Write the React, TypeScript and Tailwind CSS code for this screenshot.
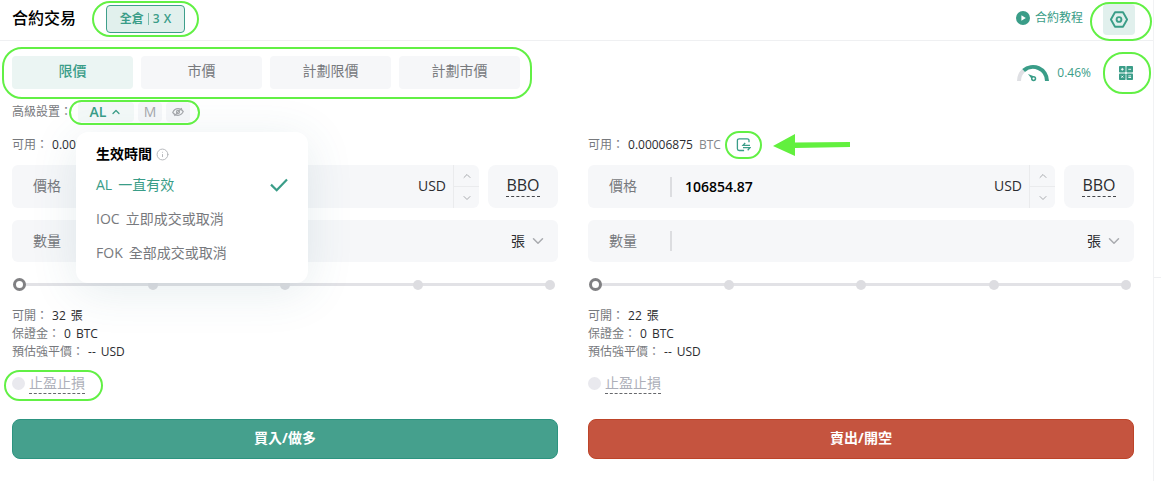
import { useState } from 'react'
import type { ReactNode } from 'react'
import { ChevronDown, ChevronUp, Info } from 'lucide-react'

const orderTypes = ['限價', '市價', '計劃限價', '計劃市價']

const timeInForce = [
  { code: 'AL', label: '一直有效' },
  { code: 'IOC', label: '立即成交或取消' },
  { code: 'FOK', label: '全部成交或取消' },
]

// Green outline that points out a feature of the form
function Highlight({ className }: { className: string }) {
  return (
    <span
      aria-hidden="true"
      className={`pointer-events-none absolute z-30 border-2 border-[#62f045] ${className}`}
    />
  )
}

function SettingsIcon() {
  return (
    <svg width="20" height="20" viewBox="0 0 20 20" fill="none" stroke="#3a9d88" strokeWidth="1.9" strokeLinejoin="round">
      <path d="M6 2.2h8l4.1 7.3-4.1 7.300H6L1.900 9.500z" />
      <circle cx="10" cy="9.5" r="2.4" />
    </svg>
  )
}

function PlayIcon() {
  return (
    <svg width="14" height="14" viewBox="0 0 14 14">
      <circle cx="7" cy="7" r="7" fill="#3a9d88" />
      <path d="M5.4 4.2v5.6L9.8 7z" fill="#fff" />
    </svg>
  )
}

function GaugeIcon() {
  return (
    <svg width="32" height="18" viewBox="0 0 32 18" fill="none">
      <path d="M2 17A14 14 0 0 1 6.6 6.6" stroke="#dfe0e4" strokeWidth="4" />
      <path d="M6.6 6.6A14 14 0 0 1 30 17" stroke="#3a9d88" strokeWidth="4" />
      <path d="M11 10l5.800 2.300-2.200 2.400z" fill="#3a9d88" />
      <circle cx="16.6" cy="14.6" r="1.9" fill="#fff" stroke="#3a9d88" strokeWidth="1.5" />
    </svg>
  )
}

function CalculatorIcon() {
  return (
    <svg width="14" height="14" viewBox="0 0 14 14">
      <g fill="#3a9d88">
        <rect width="6.6" height="6.6" rx=".8" />
        <rect x="7.4" width="6.6" height="6.6" rx=".8" />
        <rect y="7.4" width="6.6" height="6.6" rx=".8" />
        <rect x="7.4" y="7.4" width="6.6" height="6.6" rx=".8" />
      </g>
      <path
        d="M1.900 3.300h2.800M3.300 1.900v2.800M9.300 3.300h2.800M2.300 9.700l2 2M4.300 9.700l-2 2M9.300 9.900h2.800M9.300 11.500h2.800"
        stroke="#fff"
        strokeWidth=".9"
      />
    </svg>
  )
}

function TransferIcon() {
  return (
    <svg width="15" height="14" viewBox="0 0 15 14" fill="none" stroke="#3a9d88" strokeWidth="1.3">
      <path d="M13 4.300V2.500A1.700 1.700 0 0 0 11.300.8H3.100A1.700 1.700 0 0 0 1.400 2.500v8.300a1.700 1.700 0 0 0 1.700 1.700h5" />
      <path d="M14 7.400H7l2.200-2.400M7 9.700h7l-2.300 2.500" />
    </svg>
  )
}

function HiddenIcon() {
  return (
    <svg width="12" height="10" viewBox="0 0 12 10" fill="none" stroke="#a6a8ac" strokeWidth="1.1">
      <path d="M.7 5.400C2 2.700 4 1.600 6 1.600c2.200 0 4 1 5.300 3C10 7.300 8 8.400 6 8.400 3.800 8.400 2 7.400.7 5.400z" />
      <circle cx="6" cy="5" r="1.6" />
      <path d="M2.400 8.800L9.800 1.200" />
    </svg>
  )
}

function ArrowLeftMark() {
  return (
    <svg
      width="77"
      height="24"
      viewBox="0 0 77 24"
      aria-hidden="true"
      className="pointer-events-none absolute top-1/2 left-full ml-[22px] -translate-y-1/2"
    >
      <path d="M0 13L22 1v8.500L77 9v5l-55 1v8z" fill="#62f03e" />
    </svg>
  )
}

function TimeInForceMenu() {
  const [selected, setSelected] = useState('AL')

  return (
    <div className="absolute top-[30px] -left-[2px] z-20 w-[232px] rounded-xl bg-white px-5 pt-3 pb-[13px] shadow-[0_8px_48px_rgba(50,110,125,0.12)]">
      <div className="flex h-5 items-center gap-1 text-sm font-bold text-black">
        生效時間
        <Info className="mt-px h-[13px] w-[13px] text-[#b4b6ba]" strokeWidth={1.8} />
      </div>
      <div className="mt-1">
        {timeInForce.map(({ code, label }) => (
          <button
            key={code}
            type="button"
            onClick={() => setSelected(code)}
            className={`flex h-[34px] w-full items-center gap-[6px] text-left text-sm ${
              selected === code ? 'text-[#3a9d88]' : 'text-[#77797d]'
            }`}
          >
            <span>{code}</span>
            <span>{label}</span>
            {selected === code && (
              <svg className="ml-auto" width="18" height="14" viewBox="0 0 18 14" fill="none" stroke="#3a9d88" strokeWidth="2.200">
                <path d="M1 6.600l5.700 5.600L17 1.600" />
              </svg>
            )}
          </button>
        ))}
      </div>
    </div>
  )
}

function PriceField({ id }: { id: string }) {
  return (
    <div className="mt-[11px] flex gap-[9px]">
      <div className="flex h-[43px] min-w-0 flex-1 items-center rounded-md bg-[#f6f7f9] text-sm">
        <label htmlFor={id} className="w-[82px] shrink-0 pb-px pl-[21px] text-[#77797d]">
          價格
        </label>
        <input
          id={id}
          defaultValue="106854.87"
          className="h-5 min-w-0 flex-1 border-l-2 border-[#dcdde0] bg-transparent pl-[13px] font-semibold text-black outline-none"
        />
        <span className="mr-[7px] pb-px text-[#2b2c30]">USD</span>
        <div className="flex w-[26px] flex-col self-stretch border-l border-[#eaebed] text-[#a9abaf]">
          <button type="button" aria-label="增加" className="flex flex-1 items-center justify-center border-b border-[#eaebed]">
            <ChevronUp className="h-3 w-3" strokeWidth={2} />
          </button>
          <button type="button" aria-label="減少" className="flex flex-1 items-center justify-center">
            <ChevronDown className="h-3 w-3" strokeWidth={2} />
          </button>
        </div>
      </div>
      <button type="button" className="flex w-[70px] items-center justify-center rounded-lg bg-[#f6f7f9] pb-[3px] text-[#2b2c30]">
        <span className="border-b border-dashed border-[#44464a] leading-[22px]">BBO</span>
      </button>
    </div>
  )
}

function AmountField({ id }: { id: string }) {
  return (
    <div className="mt-3 flex h-[42px] items-center rounded-md bg-[#f6f7f9] pr-3 text-sm">
      <label htmlFor={id} className="w-[82px] shrink-0 pl-[21px] text-[#77797d]">
        數量
      </label>
      <input
        id={id}
        className="h-5 min-w-0 flex-1 border-l-2 border-[#dcdde0] bg-transparent pl-[13px] font-semibold text-black outline-none"
      />
      <div className="relative">
        <select aria-label="單位" className="w-[35px] appearance-none bg-transparent text-[#2b2c30] outline-none">
          <option>張</option>
        </select>
        <ChevronDown
          className="pointer-events-none absolute top-px -right-px h-[18px] w-[18px] text-[#a9abaf]"
          strokeWidth={2}
        />
      </div>
    </div>
  )
}

function AmountSlider() {
  return (
    <div className="relative mt-4 h-[13px] px-[3px]">
      <div className="mx-1 h-[13px] border-y-[5px] border-white bg-[#e2e2e6]" />
      <div className="absolute inset-x-[3px] inset-y-0 flex items-center justify-between">
        {[0, 25, 50, 75, 100].map((step) => (
          <span key={step} className="h-[10px] w-[10px] rounded-full bg-[#dddde1]" />
        ))}
      </div>
      <input
        type="range"
        aria-label="倉位比例"
        defaultValue={0}
        className="absolute inset-x-px inset-y-0 h-[13px] appearance-none bg-transparent [&::-webkit-slider-thumb]:h-[13px] [&::-webkit-slider-thumb]:w-[13px] [&::-webkit-slider-thumb]:appearance-none [&::-webkit-slider-thumb]:rounded-full [&::-webkit-slider-thumb]:border-[3px] [&::-webkit-slider-thumb]:border-[#808083] [&::-webkit-slider-thumb]:bg-white"
      />
    </div>
  )
}

function InfoLine({ label, value, unit }: { label: string; value: ReactNode; unit: string }) {
  return (
    <div className="flex gap-1 text-xs leading-[18px]">
      <dt className="text-[#77797d]">{label}：</dt>
      <dd className="flex gap-[5px] text-[#2b2c30]">
        <span>{value}</span>
        <span>{unit}</span>
      </dd>
    </div>
  )
}

interface OrderFormProps {
  side: 'buy' | 'sell'
  maxAmount: number
  action: string
  highlighted: 'transfer' | 'stop'
}

function OrderForm({ side, maxAmount, action, highlighted }: OrderFormProps) {
  return (
    <form onSubmit={(e) => e.preventDefault()}>
      <div className="flex h-[18px] items-center text-xs">
        <span className="text-[#77797d]">可用：</span>
        <span className="ml-1 font-medium text-[#2b2c30]">0.00006875</span>
        <span className="ml-[6px] text-[#85878b]">BTC</span>
        <button type="button" aria-label="劃轉" className="relative ml-[15px]">
          <TransferIcon />
          {highlighted === 'transfer' && (
            <>
              <Highlight className="-inset-x-[11px] -inset-y-[7px] rounded-[14px]" />
              <ArrowLeftMark />
            </>
          )}
        </button>
      </div>

      <PriceField id={`${side}-price`} />
      <AmountField id={`${side}-amount`} />
      <AmountSlider />

      <dl className="mt-4">
        <InfoLine label="可開" value={maxAmount} unit="張" />
        <InfoLine label="保證金" value={0} unit="BTC" />
        <InfoLine label="預估強平價" value="--" unit="USD" />
      </dl>

      <div className="mt-3 flex">
        <label className="relative flex items-center gap-1 text-sm leading-5 text-[#adafb9]">
          <input type="checkbox" className="h-[13px] w-[13px] appearance-none rounded-full bg-[#e9e9ee]" />
          <span className="border-b border-dashed border-[#66686c]">止盈止損</span>
          {highlighted === 'stop' && <Highlight className="-top-[3px] -right-[18px] -bottom-[7px] -left-2 rounded-[16px]" />}
        </label>
      </div>

      <button
        type="submit"
        className={`mt-[25px] h-10 w-full rounded-lg border pb-[3px] text-sm font-bold text-white ${
          side === 'buy' ? 'border-[#2c9480] bg-[#45a08d]' : 'border-[#bd4429] bg-[#c5543f]'
        }`}
      >
        {action}
      </button>
    </form>
  )
}

export default function App() {
  const [orderType, setOrderType] = useState('限價')

  return (
    <div className="flex min-h-screen bg-white font-['Open_Sans','Noto_Sans_CJK_TC',sans-serif]">
      <main className="min-w-0 flex-1 border-r border-[#f1f2f4]">
        <header className="flex h-[41px] items-start border-b border-[#eff0f2] pr-[18px] pl-3">
          <h1 className="mt-[6px] text-base font-medium text-black">合約交易</h1>
          <button
            type="button"
            className="relative mt-[5px] ml-[30px] flex h-7 w-[79px] items-center justify-center gap-1 rounded border border-[#3f9f8b] bg-[#e1f0ed] text-xs font-semibold text-[#3a9d88]"
          >
            全倉
            <span className="h-3 w-px bg-[#7bbcae]" />
            <span>3</span>
            <span>X</span>
            <Highlight className="-inset-x-[15px] -inset-y-[5px] rounded-[19px]" />
          </button>
          <a href="#guide" className="mt-[9px] ml-auto flex items-center gap-[5px] text-xs leading-[18px] text-[#3a9d88]">
            <PlayIcon />
            合約教程
          </a>
          <button
            type="button"
            aria-label="設置"
            className="relative mt-1 ml-5 flex h-[31px] w-8 items-center justify-center rounded bg-[#e1f0ed]"
          >
            <SettingsIcon />
            <Highlight className="-top-[2px] -right-[17px] -bottom-[6px] -left-[13px] rounded-[20px]" />
          </button>
        </header>

        <div className="pt-[15px] pr-[19px] pb-5 pl-3">
          <div className="flex items-center justify-between">
            <nav className="relative flex gap-2">
              {orderTypes.map((type) => (
                <button
                  key={type}
                  type="button"
                  onClick={() => setOrderType(type)}
                  className={`h-[33px] w-[121px] rounded pb-[3px] text-sm ${
                    orderType === type ? 'bg-[#ebf5f3] font-medium text-[#3a9d88]' : 'bg-[#f6f7f9] text-[#77797d]'
                  }`}
                >
                  {type}
                </button>
              ))}
              <Highlight className="-top-[9px] -right-[12px] -bottom-[10px] -left-[10px] rounded-[20px]" />
            </nav>
            <div className="flex items-center text-xs text-[#3a9d88]">
              <GaugeIcon />
              <span className="ml-2">0.46%</span>
              <button type="button" aria-label="計算器" className="relative mr-px ml-7">
                <CalculatorIcon />
                <Highlight className="-inset-y-[14px] -right-[18px] -left-4 rounded-[20px]" />
              </button>
            </div>
          </div>

          <div className="mt-[13px] flex items-center text-xs text-[#77797d]">
            高級設置：
            <div className="relative ml-[6px] flex h-5 gap-1 text-sm leading-5">
              <button
                type="button"
                aria-expanded="true"
                className="flex w-[56px] items-center justify-center gap-1 rounded bg-[#f4f9f8] font-semibold text-[#3a9d88]"
              >
                AL
                <ChevronUp className="h-3 w-3" strokeWidth={2.5} />
              </button>
              <button type="button" className="w-6 rounded bg-[#f6f7f9] text-[#a6a8ac]">
                M
              </button>
              <button type="button" aria-label="隱藏" className="flex w-6 items-center justify-center rounded bg-[#f6f7f9]">
                <HiddenIcon />
              </button>
              <TimeInForceMenu />
              <Highlight className="-top-[2px] -right-[10px] -bottom-[3px] -left-[9px] rounded-[13px]" />
            </div>
          </div>

          <div className="mt-[14px] grid grid-cols-2 gap-[30px]">
            <OrderForm side="buy" maxAmount={32} action="買入/做多" highlighted="stop" />
            <OrderForm side="sell" maxAmount={22} action="賣出/開空" highlighted="transfer" />
          </div>
        </div>
      </main>
      <aside className="w-[7px]">
        <div className="h-[278px] border-b border-[#eff0f2]" />
      </aside>
    </div>
  )
}
